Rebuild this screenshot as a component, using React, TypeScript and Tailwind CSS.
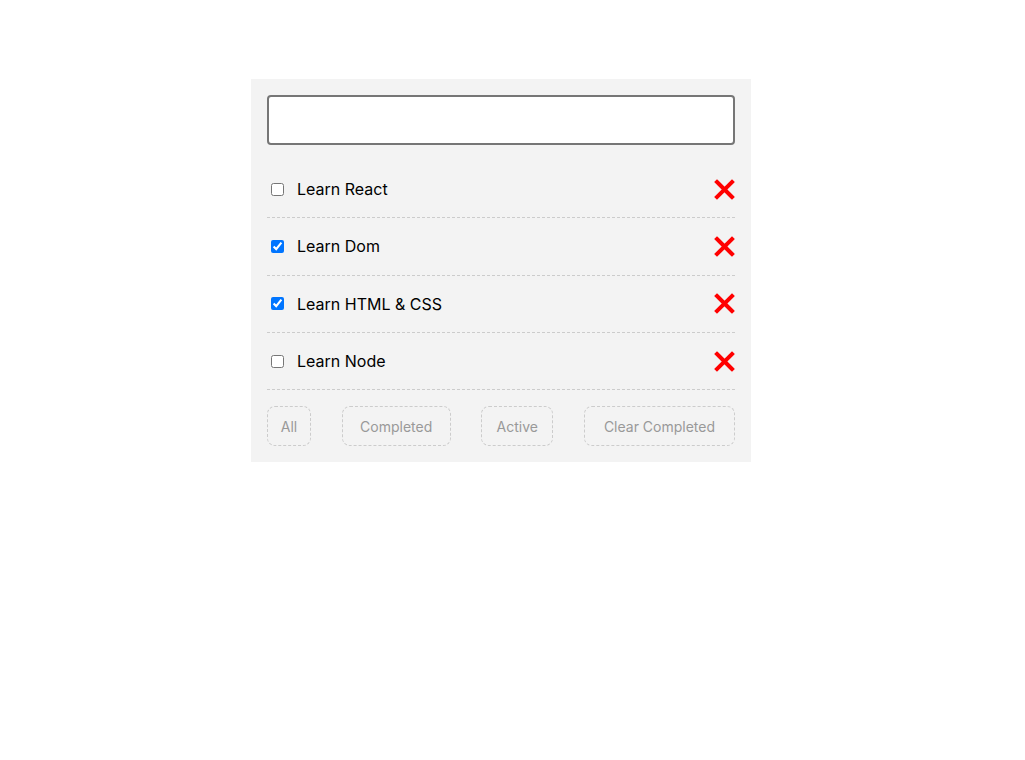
import React, { useState } from 'react';

type Todo = { id: number; text: string; done: boolean };

const initial: Todo[] = [
  { id: 1, text: 'Learn React', done: false },
  { id: 2, text: 'Learn Dom', done: true },
  { id: 3, text: 'Learn HTML & CSS', done: true },
  { id: 4, text: 'Learn Node', done: false },
];

const RedCross = () => (
  <svg width="21" height="21" viewBox="0 0 21 21">
    <path d="M3 3 L18 18 M18 3 L3 18" stroke="#ff0000" strokeWidth="4" strokeLinecap="square" />
  </svg>
);

export default function App() {
  const [todos, setTodos] = useState<Todo[]>(initial);
  const [value, setValue] = useState('');

  const toggle = (id: number) =>
    setTodos(todos.map(t => (t.id === id ? { ...t, done: !t.done } : t)));
  const remove = (id: number) => setTodos(todos.filter(t => t.id !== id));

  return (
    <div
      className="min-h-screen bg-white pt-[79px]"
      style={{ fontFamily: 'Inter, "Open Sans", sans-serif' }}
    >
      <div className="ml-[251px] w-[500px] bg-[#f3f3f3] p-4">
        <input
          value={value}
          onChange={e => setValue(e.target.value)}
          className="block h-[50px] w-full rounded-[4px] border-2 border-[#767676] bg-white px-3 text-base outline-none"
        />
        <ul className="mt-4">
          {todos.map(t => (
            <li
              key={t.id}
              className="flex h-[57.33px] items-center border-b border-dashed border-[#cccccc]"
            >
              <input
                type="checkbox"
                checked={t.done}
                onChange={() => toggle(t.id)}
                className="m-[4px] h-[13px] w-[13px] accent-[#0075ff]"
              />
              <span className="ml-[9px] flex-1 text-[16px] text-black">{t.text}</span>
              <button onClick={() => remove(t.id)} className="flex">
                <RedCross />
              </button>
            </li>
          ))}
        </ul>
        <div className="mt-4 flex justify-between">
          {[
            { label: 'All', w: 'w-[44px]' },
            { label: 'Completed', w: 'w-[109px]' },
            { label: 'Active', w: 'w-[72px]' },
            { label: 'Clear Completed', w: 'w-[151px]' },
          ].map(b => (
            <button
              key={b.label}
              className={`${b.w} h-[40px] rounded-[8px] border border-dashed border-[#cccccc] text-[14px] text-[#999999]`}
            >
              {b.label}
            </button>
          ))}
        </div>
      </div>
    </div>
  );
}
